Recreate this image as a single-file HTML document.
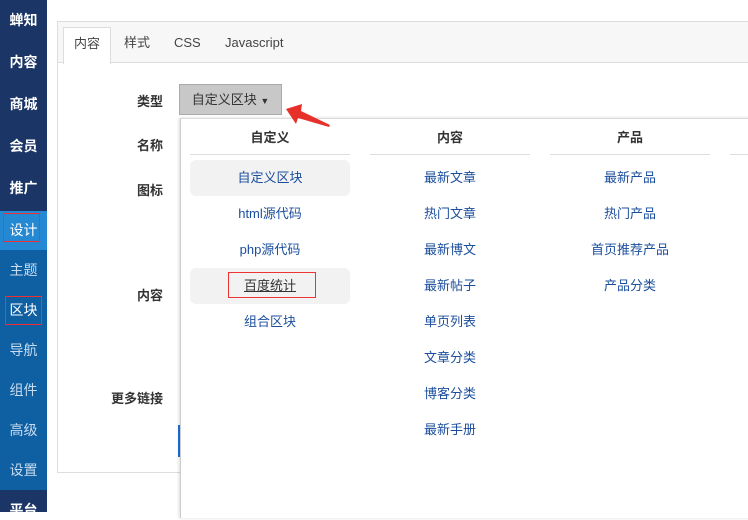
<!DOCTYPE html>
<html><head><meta charset="utf-8"><style>
*{margin:0;padding:0;box-sizing:border-box}
body{width:748px;height:512px;overflow:hidden;background:#fff;font-family:"Liberation Sans","Noto Sans CJK SC",sans-serif;font-size:13px;position:relative;color:#333}
.side{position:absolute;left:0;top:0;width:47px;height:512px;background:#0f5fa3}
.side .dk{position:absolute;left:0;width:47px;background:#1b3566}
.side div.it{position:absolute;left:0;width:47px;text-align:center;color:#fff;font-size:14px;font-weight:bold;line-height:20px}
.side div.lt{color:#c6dcf0;font-weight:normal}
.panel{position:absolute;left:57px;top:21px;width:700px;height:452px;border:1px solid #ddd}
.tabs{height:41px;background:#f7f7f7;border-bottom:1px solid #ddd;position:relative}
.tab{position:absolute;top:5px;height:36px;line-height:32px;font-size:13px;color:#444}
.tab.a{background:#fff;border:1px solid #ddd;border-bottom:none;left:5px;width:48px;text-align:center;height:37px}
.lbl{position:absolute;width:60px;text-align:right;left:103px;font-weight:bold;font-size:13px}
.sel{position:absolute;left:179px;top:84px;width:103px;height:31px;background:#c8c8c8;border:1px solid #aaa;line-height:29px;text-align:center;color:#333}
.dd{position:absolute;left:180px;top:118px;width:580px;height:400px;background:#fff;border-left:1px solid #ccc;border-top:1px solid #ddd;box-shadow:-1px 0 3px rgba(0,0,0,.15)}
.col{position:absolute;top:0;width:160px;text-align:center}
.col h{display:block;font-weight:bold;height:36px;line-height:38px;border-bottom:1px solid #ddd;color:#333}
.col a{display:block;height:36px;line-height:36px;color:#1a4d9c;text-decoration:none;border-radius:6px}
.rb{position:absolute;border:1px solid #f03030;z-index:5}
</style></head><body>
<div class="side">
<div class="dk" style="top:0;height:211px"></div>
<div class="dk" style="top:490px;height:22px"></div>
<div style="position:absolute;top:211px;left:0;width:47px;height:39px;background:#2588d3"></div>
<div class="it" style="top:10px">蝉知</div>
<div class="it" style="top:52px">内容</div>
<div class="it" style="top:94px">商城</div>
<div class="it" style="top:136px">会员</div>
<div class="it" style="top:178px">推广</div>
<div class="it" style="top:220px;font-weight:normal">设计</div>
<div class="it lt" style="top:260px">主题</div>
<div class="it" style="top:300px;font-weight:normal">区块</div>
<div class="it lt" style="top:340px">导航</div>
<div class="it lt" style="top:380px">组件</div>
<div class="it lt" style="top:420px">高级</div>
<div class="it lt" style="top:460px">设置</div>
<div class="it" style="top:500px">平台</div>
</div>
<div class="rb" style="left:3px;top:213px;width:37px;height:29px"></div>
<div class="rb" style="left:5px;top:296px;width:37px;height:29px"></div>
<div class="panel"><div class="tabs">
<div class="tab a">内容</div>
<div class="tab" style="left:66px">样式</div>
<div class="tab" style="left:116px">CSS</div>
<div class="tab" style="left:167px">Javascript</div>
</div></div>
<div class="lbl" style="top:91px">类型</div>
<div class="lbl" style="top:135px">名称</div>
<div class="lbl" style="top:180px">图标</div>
<div class="lbl" style="top:285px">内容</div>
<div class="lbl" style="top:388px">更多链接</div>
<div style="position:absolute;left:178px;top:425px;width:3px;height:32px;background:#1e6ee0"></div>
<div class="sel">自定义区块 <span style="font-size:9px">▼</span></div>
<div class="dd">
<div class="col" style="left:9px"><h>自定义</h>
<div style="height:5px"></div>
<a style="background:#f2f2f2">自定义区块</a><a>html源代码</a><a>php源代码</a>
<a style="background:#f2f2f2;color:#333;position:relative"><span style="text-decoration:underline">百度统计</span><span style="position:absolute;left:38px;top:4px;width:88px;height:26px;border:1px solid #e33"></span></a><a>组合区块</a></div>
<div class="col" style="left:189px"><h>内容</h><div style="height:5px"></div>
<a>最新文章</a><a>热门文章</a><a>最新博文</a><a>最新帖子</a><a>单页列表</a><a>文章分类</a><a>博客分类</a><a>最新手册</a></div>
<div class="col" style="left:369px"><h>产品</h><div style="height:5px"></div>
<a>最新产品</a><a>热门产品</a><a>首页推荐产品</a><a>产品分类</a></div>
<div class="col" style="left:549px"><h>&nbsp;</h></div>
</div>
<svg style="position:absolute;left:284px;top:100px;z-index:6" width="50" height="30"><polygon points="2,9 18,4 17,11 46,25 45,27 14,18 12,24" fill="#e8302b"/></svg>
</body></html>
